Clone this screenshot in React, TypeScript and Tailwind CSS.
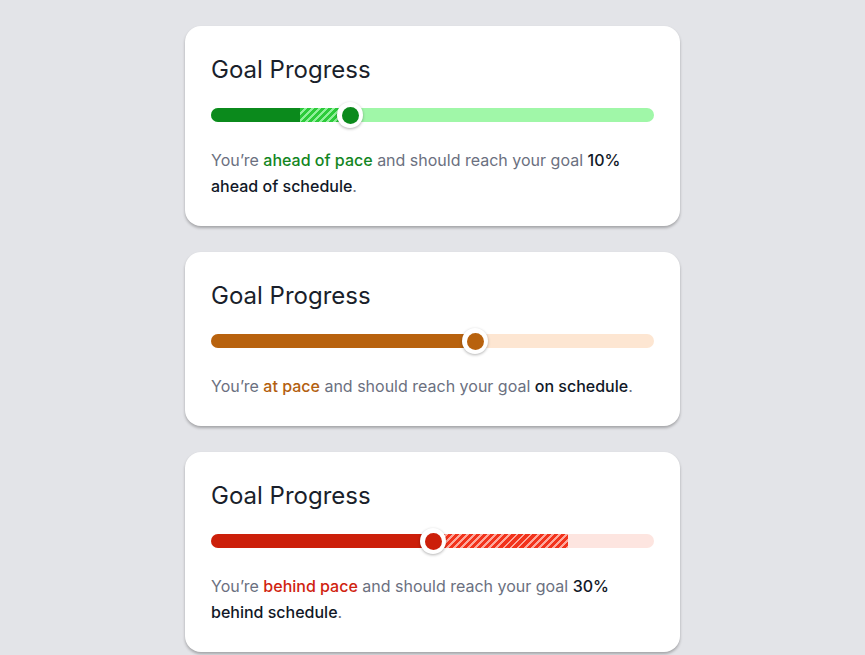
type Tone = {
  fill: string;
  track: string;
  hatch: string;
  dot: string;
  accent: string;
};

const green: Tone = {
  fill: "bg-[#0b8a1c]",
  track: "bg-[#a0f7a8]",
  hatch:
    "bg-[repeating-linear-gradient(135deg,#2ccb3a_0px,#2ccb3a_3px,#8ff09a_3px,#8ff09a_5px)]",
  dot: "bg-[#0b8a1c]",
  accent: "text-[#13861f]",
};

const orange: Tone = {
  fill: "bg-[#b8620e]",
  track: "bg-[#fde6d2]",
  hatch: "",
  dot: "bg-[#b8620e]",
  accent: "text-[#b3600f]",
};

const red: Tone = {
  fill: "bg-[#cc1f0a]",
  track: "bg-[#fde5e0]",
  hatch:
    "bg-[repeating-linear-gradient(135deg,#f2331c_0px,#f2331c_3px,#fda89c_3px,#fda89c_5px)]",
  dot: "bg-[#cc1f0a]",
  accent: "text-[#d0230f]",
};

function Thumb({ tone }: { tone: Tone }) {
  return (
    <div className="relative z-10 -mx-[12px] flex size-[26px] shrink-0 items-center justify-center rounded-full bg-white shadow-[0_1px_3px_rgba(0,0,0,0.3)]">
      <div className={`size-[17px] rounded-full ${tone.dot}`} />
    </div>
  );
}

function Bar({
  tone,
  solid,
  ahead,
  behind,
}: {
  tone: Tone;
  solid: string;
  ahead?: string;
  behind?: string;
}) {
  return (
    <div className={`relative flex h-[14px] w-full items-center rounded-full ${tone.track}`}>
      <div className={`h-full rounded-l-full ${tone.fill} ${solid}`} />
      {ahead && <div className={`h-full ${tone.hatch} ${ahead}`} />}
      <Thumb tone={tone} />
      {behind && <div className={`h-full ${tone.hatch} ${behind}`} />}
    </div>
  );
}

function Card({ children }: { children: React.ReactNode }) {
  return (
    <div className="flex w-[495px] flex-col rounded-2xl bg-white px-[26px] pb-[27px] pt-[28px] shadow-[0_2px_3px_rgba(0,0,0,0.28)]">
      <h2 className="text-[24px] leading-[32px] font-normal text-[#1a1f2b]">Goal Progress</h2>
      {children}
    </div>
  );
}

export default function App() {
  return (
    <div className="flex min-h-screen w-full justify-center bg-[#e3e4e8] pt-[26px] font-['Inter','Liberation_Sans',sans-serif]">
      <div className="flex flex-col gap-[26px]">
        <Card>
          <div className="mt-[22px] flex">
            <Bar tone={green} solid="w-[89px]" ahead="w-[49px]" />
          </div>
          <p className="mt-[25px] text-[16px] leading-[26px] text-[#6b7080]">
            You’re <span className={`font-medium ${green.accent}`}>ahead of pace</span> and should reach your goal{" "}
            <span className="font-medium text-[#111827]">10% ahead of schedule</span>.
          </p>
        </Card>
        <Card>
          <div className="mt-[22px] flex">
            <Bar tone={orange} solid="w-[263px]" />
          </div>
          <p className="mt-[25px] text-[16px] leading-[26px] text-[#6b7080]">
            You’re <span className={`font-medium ${orange.accent}`}>at pace</span> and should reach your goal{" "}
            <span className="font-medium text-[#111827]">on schedule</span>.
          </p>
        </Card>
        <Card>
          <div className="mt-[22px] flex">
            <Bar tone={red} solid="w-[221px]" behind="w-[134px]" />
          </div>
          <p className="mt-[25px] text-[16px] leading-[26px] text-[#6b7080]">
            You’re <span className={`font-medium ${red.accent}`}>behind pace</span> and should reach your goal{" "}
            <span className="font-medium text-[#111827]">30% behind schedule</span>.
          </p>
        </Card>
      </div>
    </div>
  );
}
